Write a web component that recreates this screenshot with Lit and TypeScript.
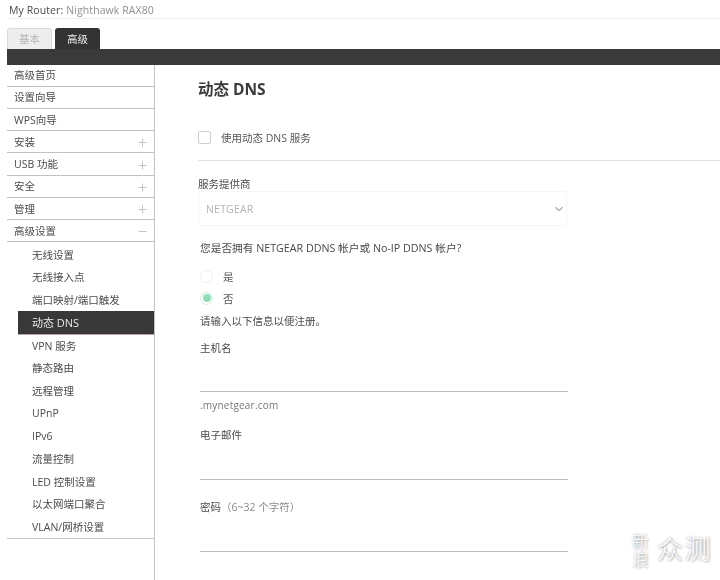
import { LitElement, html, css, svg } from "lit";
import { customElement } from "lit/decorators.js";

const top1 = [
  ["高级首页", ""], ["设置向导", ""], ["WPS向导", ""], ["安装", "+"], ["USB 功能", "+"],
  ["安全", "+"], ["管理", "+"], ["高级设置", "-"],
];
const subs = ["无线设置", "无线接入点", "端口映射/端口触发", "动态 DNS", "VPN 服务", "静态路由", "远程管理", "UPnP", "IPv6", "流量控制", "LED 控制设置", "以太网端口聚合", "VLAN/网桥设置"];

const signIcon = (k: string) => svg`<svg class="sign" width="9" height="9" viewBox="0 0 9 9">
  <path d="M0.5 4.5H8.5" stroke="#c4c4c4" stroke-width="1" fill="none"/>
  ${k === "+" ? svg`<path d="M4.5 0.5V8.5" stroke="#c4c4c4" stroke-width="1" fill="none"/>` : ""}
</svg>`;

@customElement("app-root")
export class AppRoot extends LitElement {
  static styles = css`
    :host {
      display: block;
      position: relative;
      width: 720px;
      height: 580px;
      overflow: hidden;
      background: #fff;
      color: #4a4a4a;
      font-family: "Open Sans", "Noto Sans CJK SC", sans-serif;
      font-size: 10.5px;
    }
    .page { display: flex; flex-direction: column; height: 580px; padding-left: 7px; box-sizing: border-box; filter: blur(0.3px); }
    .router {
      height: 19px; box-sizing: border-box; border-bottom: 1px solid #efefef;
      padding: 3px 0 0 2px; font-size: 10.5px; line-height: 14px; color: #8f8f8f; letter-spacing: 0.1px;
    }
    .router b { font-weight: 400; color: #4a4a4a; }
    .tabs { display: flex; gap: 3px; height: 21px; margin-top: 9px; align-items: flex-end; }
    .tab {
      display: flex; align-items: center; justify-content: center; box-sizing: border-box;
      width: 45px; height: 21px; border-radius: 3px 3px 0 0; padding-bottom: 1px;
    }
    .tab.off { background: #ededed; color: #b5b5b5; border: 1px solid #dcdcdc; border-bottom: 0; }
    .tab.on { background: #333; color: #eee; }
    .bar { height: 16px; background: #3a3a3a; flex: none; }
    .body { display: flex; flex: 1; min-height: 0; }
    .side { width: 147px; border-right: 1px solid #c4c4c4; flex: none; box-sizing: content-box; }
    .item {
      display: flex; align-items: center; justify-content: space-between; box-sizing: border-box;
      height: 22.25px; padding: 0 7px 0 7px; border-bottom: 1px solid #c2c2c2;
    }
    .item:first-child { height: 21.7px; }
    .item span { position: relative; top: -0.5px; }
    .sign { display: block; margin-top: 2px; }
    .subs { padding-top: 0.5px; border-bottom: 1px solid #c8c8c8; }
    .sub { display: flex; align-items: center; height: 22.7px; padding-left: 25px; }
    .sub.on {
      margin-left: 11px; padding-left: 14px; background: #383838; color: #e8e8e8;
      font-size: 11px; box-shadow: 0 1px 0 #b9a3b3;
    }
    .main { flex: 1; min-width: 0; padding: 14px 0 0 43px; position: relative; }
    h1 { margin: 0; font-size: 15.5px; line-height: 20px; font-weight: 700; color: #3a3a3a; height: 20px; }
    .check { display: flex; align-items: center; gap: 10px; margin-top: 30px; height: 16px; font-size: 10.5px; color: #555; }
    .box { width: 11px; height: 11px; border: 1px solid #cfcfcf; border-radius: 2px; flex: none; }
    .rule { height: 1px; background: #e2e2e2; margin-top: 15px; }
    .label { line-height: 14px; }
    .provider { margin-top: 16px; }
    .select {
      width: 369px; height: 35px; box-sizing: border-box; margin-top: 0;
      border: 1px solid #f6f6f6; border-radius: 2px;
      display: flex; align-items: center; justify-content: space-between;
      padding: 0 2px 0 7px; color: #b4b4b4; font-size: 10.5px; letter-spacing: 0.2px;
    }
    .select svg { display: block; }
    .q { margin-top: 15px; margin-left: 2px; color: #4a4a4a; font-size: 10.7px; }
    .radio { display: flex; align-items: center; gap: 10px; height: 22px; margin-left: 2px; color: #555; }
    .radios { margin-top: 10px; }
    .dot {
      width: 11px; height: 11px; border: 1px solid #ececec; border-radius: 50%; flex: none;
      display: flex; align-items: center; justify-content: center;
    }
    .dot.on { border-color: #cdeedd; }
    .dot.on::after { content: ""; width: 8px; height: 8px; border-radius: 50%; background: #8fdcb5; }
    .hint { margin-left: 2px; margin-top: 5px; }
    .field { width: 368px; margin-left: 2px; }
    .line { height: 1px; background: #bdbdbd; }
    .host { margin-top: 13px; }
    .host .line { margin-top: 36px; }
    .suffix { margin-top: 6px; color: #777; font-size: 10px; letter-spacing: 0.2px; }
    .mail { margin-top: 16px; }
    .mail .line { margin-top: 37px; }
    .pass { margin-top: 20px; }
    .pass .line { margin-top: 37px; }
    .gray { color: #8a8a8a; }
    .mark {
      position: absolute; left: 632px; top: 531px; display: flex; align-items: flex-start; gap: 8px;
      color: #fff; text-shadow: 0 0 3px rgba(0,0,0,.4), 1px 1px 2px rgba(0,0,0,.2);
      font-family: "Noto Sans CJK SC", sans-serif; font-weight: 300;
    }
    .mark .v { font-size: 17px; line-height: 18px; width: 17px; padding-top: 1px; }
    .mark .big { font-size: 26px; line-height: 34px; letter-spacing: 1.5px; }
  `;

  render() {
    return html`
      <div class="page">
        <div class="router"><b>My Router:</b> Nighthawk RAX80</div>
        <div class="tabs"><div class="tab off">基本</div><div class="tab on">高级</div></div>
        <div class="bar"></div>
        <div class="body">
          <nav class="side">
            ${top1.map(([t, s]) => html`<div class="item"><span>${t}</span>${s ? signIcon(s) : ""}</div>`)}
            <div class="subs">
              ${subs.map((t) => html`<div class="sub ${t === "动态 DNS" ? "on" : ""}">${t}</div>`)}
            </div>
          </nav>
          <main class="main">
            <h1>动态 DNS</h1>
            <div class="check"><span class="box"></span><span>使用动态 DNS 服务</span></div>
            <div class="rule"></div>
            <div class="provider label">服务提供商</div>
            <div class="select">
              <span>NETGEAR</span>
              <svg width="10" height="6" viewBox="0 0 10 6"><path d="M1.5 1.2L5 4.6L8.5 1.2" fill="none" stroke="#a8a8a8" stroke-width="1.2"/></svg>
            </div>
            <div class="q label">您是否拥有 NETGEAR DDNS 帐户或 No-IP DDNS 帐户?</div>
            <div class="radios">
              <div class="radio"><span class="dot"></span><span>是</span></div>
              <div class="radio"><span class="dot on"></span><span>否</span></div>
            </div>
            <div class="hint label">请输入以下信息以便注册。</div>
            <div class="field host"><div class="label">主机名</div><div class="line"></div><div class="suffix label">.mynetgear.com</div></div>
            <div class="field mail"><div class="label">电子邮件</div><div class="line"></div></div>
            <div class="field pass"><div class="label">密码<span class="gray">（6~32 个字符）</span></div><div class="line"></div></div>
          </main>
        </div>
      </div>
      <div class="mark"><span class="v">新浪</span><span class="big">众测</span></div>
    `;
  }
}
